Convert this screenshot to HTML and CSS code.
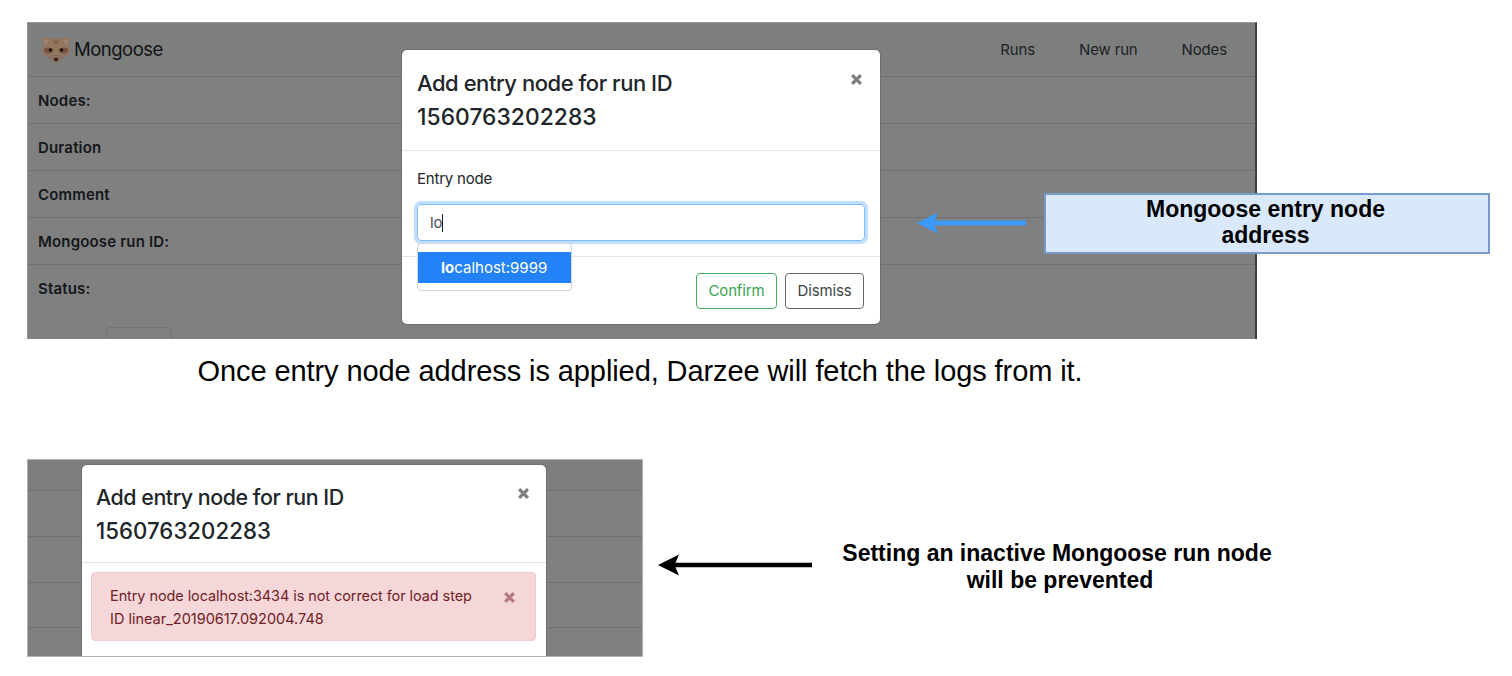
FILE: index.html
```html
<!DOCTYPE html>
<html lang="en">
<head>
<meta charset="utf-8">
<title>Mongoose entry node</title>
<link rel="stylesheet" href="styles.css">
</head>
<body>
<main class="board">
  <section class="screen screen-main">
    <header class="navbar">
      <svg class="logo" viewBox="0 0 30 28">
        <path d="M1.500 5Q1 1 5 1.200Q8 1.200 10 3Q15 1.500 20 3Q22 1.200 25 1.200Q29 1 28.500 5L27.500 9Q29.800 13 28 17.500Q25 21 21 22.500Q18 26.500 15 26.500Q12 26.500 9 22.500Q5 21 2 17.500Q.2 13 2.500 9Z" fill="#94755d"/>
        <path d="M3 5Q4 2 8 4L4.500 10ZM27 5Q26 2 22 4L25.500 10Z" fill="#9b8475"/>
        <ellipse cx="7.500" cy="14.500" rx="4.600" ry="3" fill="#76543f"/>
        <ellipse cx="22.500" cy="14.500" rx="4.600" ry="3" fill="#76543f"/>
        <path d="M3 18.500Q8 20.500 11 18.500H19Q22 20.500 27 18.500Q24 21.500 21 22.500Q18 26.500 15 26.500Q12 26.500 9 22.500Q6 21.500 3 18.500Z" fill="#8b7264"/>
        <path d="M12.500 3L15 8L17.500 3" fill="none" stroke="#6f4f3d"/>
        <circle cx="9.500" cy="14" r="1.700" fill="#171211"/><circle cx="20.500" cy="14" r="1.700" fill="#171211"/>
        <path d="M12.500 22.500Q15 21 17.500 22.500Q17 25 15 25.500Q13 25 12.500 22.500Z" fill="#40211f"/>
      </svg>
      <span class="brand">Mongoose</span>
      <nav class="links"><span>Runs</span><span>New run</span><span>Nodes</span></nav>
    </header>
    <div class="row">Nodes:</div>
    <div class="row">Duration</div>
    <div class="row">Comment</div>
    <div class="row">Mongoose run ID:</div>
    <div class="row row-last">Status:</div>
    <div class="tab"></div>

    <div class="modal modal-main">
      <div class="modal-head">
        <h1 class="title">Add entry node for run ID<br><span class="title-id">1560763202283</span></h1>
        <svg class="close" viewBox="0 0 12 12"><path d="M2 2L10 10M10 2L2 10"/></svg>
      </div>
      <div class="modal-body">
        <div class="label">Entry node</div>
        <div class="field"><span>lo</span><i class="caret"></i></div>
        <div class="suggest"><div class="option"><b>lo</b>calhost:9999</div></div>
      </div>
      <div class="modal-foot">
        <div class="btn btn-confirm">Confirm</div>
        <div class="btn btn-dismiss">Dismiss</div>
      </div>
    </div>

    <svg class="arrow arrow-blue" viewBox="0 0 110 22"><path d="M0 11L21 .5L16.500 11L21 21.500Z" fill="#3b99fc"/><path d="M16 11H109" stroke="#3b99fc" stroke-width="5"/></svg>
    <div class="callout"><span>Mongoose entry node</span><span>address</span></div>
  </section>

  <p class="caption">Once entry node address is applied, Darzee will fetch the logs from it.</p>

  <div class="bottom">
    <section class="screen screen-error">
      <div class="strip strip-head"></div>
      <div class="strip"></div>
      <div class="strip"></div>
      <div class="strip strip-short"></div>
      <div class="modal modal-error">
        <div class="modal-head">
          <h1 class="title">Add entry node for run ID<br><span class="title-id">1560763202283</span></h1>
          <svg class="close" viewBox="0 0 12 12"><path d="M2 2L10 10M10 2L2 10"/></svg>
        </div>
        <div class="alert">
          <div><span class="alert-line">Entry node localhost:3434 is not correct for load step</span><br>ID linear_20190617.092004.748</div>
          <svg class="close close-red" viewBox="0 0 12 12"><path d="M2 2L10 10M10 2L2 10"/></svg>
        </div>
      </div>
    </section>
    <svg class="arrow arrow-black" viewBox="0 0 154 22"><path d="M0 11L21 .5L16.500 11L21 21.500Z"/><path d="M16 11H154" stroke="#000" stroke-width="4.600"/></svg>
    <div class="note"><span>Setting an inactive Mongoose run node</span><span class="note-end">will be prevented</span></div>
  </div>
</main>
</body>
</html>
```
FILE: styles.css
```css
* { box-sizing: border-box; }
body { margin: 0; background: #fff; color: #212529; font-family: Inter, "Liberation Sans", sans-serif; font-size: 15px; }
.board { width: 1512px; height: 676px; padding: 22px 0 0 27px; overflow: hidden; white-space: nowrap; }
.screen { position: relative; background: #808080; }
.screen-main { width: 1230px; height: 317px; border-right: 2px solid #3d4043; border-top: 1px solid #969998; border-left: 1px solid #929292; }
.navbar { display: flex; align-items: center; height: 54px; padding: 0 28px 0 13px; background: #7c7f7e; border-bottom: 1px solid #6c7072; color: #111314; }
.logo { width: 30px; height: 28px; margin-right: 3px; }
.brand { margin-bottom: 2px; font-size: 18.500px; letter-spacing: -.5px; }
.links { display: flex; gap: 44px; margin-left: auto; font-size: 15px; letter-spacing: -.15px; color: #202224; }
.row { height: 47px; padding-left: 10px; line-height: 47px; border-bottom: 1px solid #6f7071; font-weight: 600; font-size: 15px; letter-spacing: .17px; color: #14171a; }
.row-last { border-bottom: 0; }
.tab { width: 66px; height: 12px; margin: 15px 0 0 78px; border: 1px solid #717375; border-bottom: 0; border-radius: 4px 4px 0 0; }
.modal { position: absolute; background: #fff; }
.modal-main { left: 374px; top: 27px; width: 478px; height: 274px; border-radius: 5px; box-shadow: 0 0 0 1px #707070; }
.modal-head { display: flex; justify-content: space-between; height: 101px; padding: 16px 17px 0 15px; border-bottom: 1px solid #e3e6e9; }
.title { margin: 0; font-size: 22px; font-weight: 500; line-height: 34px; letter-spacing: -.46px; }
.title-id { letter-spacing: .05px; font-size: 22.800px; }
.close { width: 13px; height: 13px; margin-top: 7px; stroke: #7f7f7f; stroke-width: 3; fill: none; }
.modal-body { position: relative; height: 106px; padding: 16px 15px 0 15px; border-bottom: 1px solid #e3e6e9; }
.label { height: 37px; line-height: 23px; letter-spacing: -.2px; }
.field { display: flex; align-items: center; height: 37px; padding-left: 12px; border: 1px solid #80bdff; border-radius: 4px; box-shadow: 0 0 0 3px #bfdeff; color: #495057; letter-spacing: -.2px; }
.caret { width: 1px; height: 18px; background: #222; }
.suggest { position: absolute; left: 15px; top: 92px; width: 155px; height: 48px; padding-top: 8px; background: #fff; border: 1px solid #d5d6d8; border-radius: 4px; }
.option { height: 31px; padding-left: 23px; line-height: 31px; color: #fff; background: #2382f7; }
.modal-foot { display: flex; justify-content: flex-end; gap: 8px; padding: 16px 16px 0 0; }
.btn { width: 80px; height: 36px; line-height: 34px; text-align: center; border: 1px solid; border-radius: 4px; letter-spacing: -.15px; }
.btn-confirm { width: 81px; color: #38a652; border-color: #45ae5d; }
.btn-dismiss { width: 79px; color: #404448; border-color: #65696e; }
.arrow { overflow: visible; }
.arrow-blue { position: absolute; left: 889px; top: 189px; width: 110px; height: 22px; }
.callout { position: absolute; left: 1016px; top: 170px; width: 446px; height: 61px; padding: 1px 3px 0 0; display: flex; flex-direction: column; align-items: center; background: #dae8fc; border: 2px solid #7799cb; font: bold 23px/26px "Liberation Sans", sans-serif; color: #000; }
.caption { margin: 14px 0 0 170.500px; font: 29px/36px "Liberation Sans", sans-serif; letter-spacing: -.09px; color: #000; height: 106px; }
.bottom { display: flex; }
.screen-error { width: 616px; height: 198px; border: 1px solid #b0b1b1; overflow: hidden; }
.strip { height: 46px; border-bottom: 1px solid #6f7071; }
.strip-head { height: 31px; background: #7c7f7e; }
.strip-short { height: 45px; }
.modal-error { left: 54px; top: 5px; width: 464px; height: 200px; border-radius: 5px 5px 0 0; box-shadow: 0 0 0 1px #707070; }
.modal-error .modal-head { height: 98px; padding: 15px 16px 0 14px; }
.modal-error .title { font-size: 21.400px; }
.modal-error .title-id { font-size: 22.200px; }
.alert { display: flex; justify-content: space-between; width: 445px; height: 69px; margin: 9px 0 0 9px; padding: 12px 19px 0 18px; background: #f5d7da; border: 1px solid #f3c8cd; border-radius: 4px; color: #721c24; font-size: 14.500px; line-height: 22.600px; }
.alert-line { letter-spacing: -.085px; }
.close-red { margin-top: 6px; stroke: #b67b82; }
.arrow-black { width: 154px; height: 22px; margin: 95px 0 0 15px; }
.note { display: flex; flex-direction: column; align-items: center; width: 432px; margin: 81px 0 0 29px; font: bold 23px/27px "Liberation Sans", sans-serif; color: #000; }
.note-end { padding-left: 6px; }
```
